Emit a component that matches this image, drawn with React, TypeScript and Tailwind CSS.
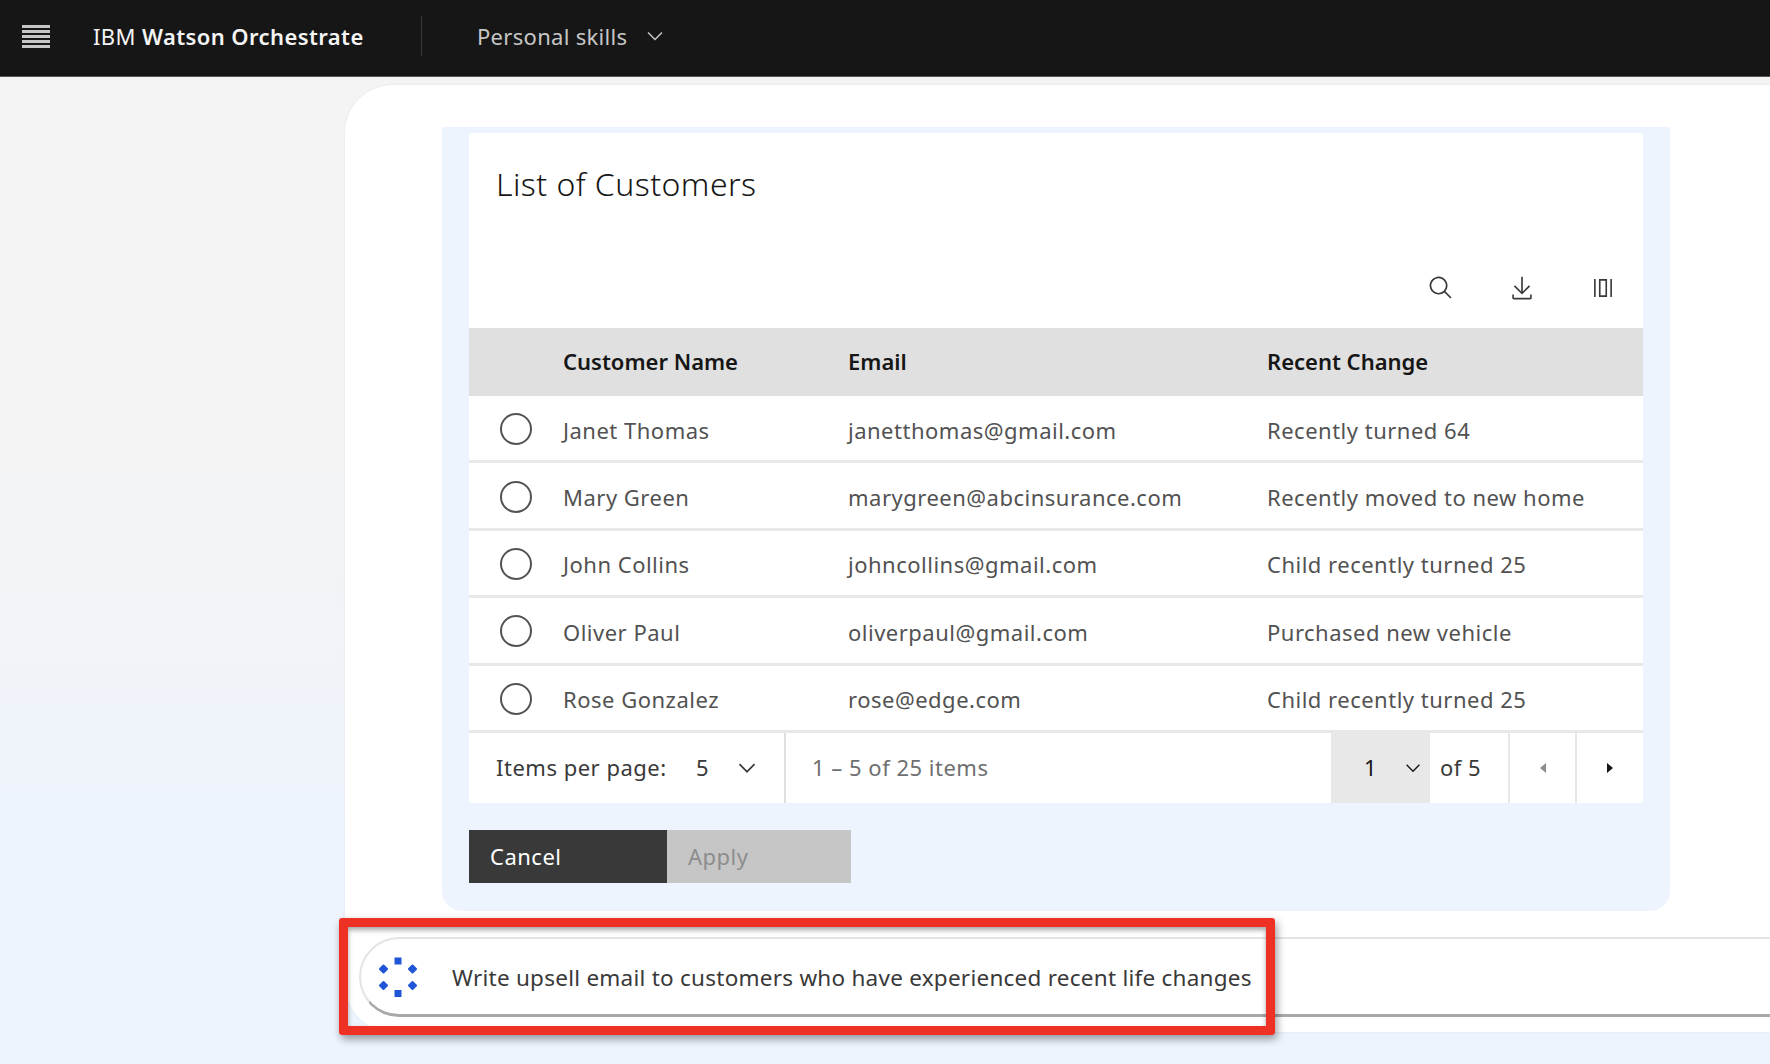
import React from "react";

const font = { fontFamily: '"Noto Sans", "Liberation Sans", sans-serif' };

function Chevron({ className }: { className: string }) {
  return (
    <svg viewBox="0 0 32 32" fill="currentColor" className={className}>
      <path d="M16 22 6 12l1.4-1.4 8.6 8.6 8.6-8.6L26 12z" />
    </svg>
  );
}

const rows = [
  ["Janet Thomas", "janetthomas@gmail.com", "Recently turned 64"],
  ["Mary Green", "marygreen@abcinsurance.com", "Recently moved to new home"],
  ["John Collins", "johncollins@gmail.com", "Child recently turned 25"],
  ["Oliver Paul", "oliverpaul@gmail.com", "Purchased new vehicle"],
  ["Rose Gonzalez", "rose@edge.com", "Child recently turned 25"],
];

function Spinner() {
  return (
    <svg viewBox="0 0 40 40" className="w-10 h-10 shrink-0" fill="#1f55d6">
      <rect x="16.5" y="0.5" width="7" height="7" />
      <rect x="16.5" y="33" width="7" height="7" />
      <rect x="2" y="8.5" width="7" height="7" rx="1" transform="rotate(45 5.5 12)" />
      <rect x="31" y="8.5" width="7" height="7" rx="1" transform="rotate(45 34.5 12)" />
      <rect x="2" y="25" width="7" height="7" rx="1" transform="rotate(45 5.5 28.5)" />
      <rect x="31" y="25" width="7" height="7" rx="1" transform="rotate(45 34.5 28.5)" />
    </svg>
  );
}

export default function App() {
  return (
    <div
      style={font}
      className="relative h-[1064px] w-full overflow-hidden flex flex-col bg-gradient-to-b from-[#f4f4f4] from-40% to-[#edf4fe] to-85%"
    >
      <header className="h-[77px] shrink-0 bg-[#161616] border-b border-[#555] flex items-center pb-[4px]">
        <div className="ml-[22px] w-7 flex flex-col gap-[2px]">
          <span className="h-[3px] bg-[#c6c6c6]" />
          <span className="h-[3px] bg-[#c6c6c6]" />
          <span className="h-[3px] bg-[#c6c6c6]" />
          <span className="h-[3px] bg-[#c6c6c6]" />
          <span className="h-[3px] bg-[#c6c6c6]" />
        </div>
        <div className="ml-[43px] w-[328px] text-[22px] text-[#f4f4f4] tracking-[0.4px] whitespace-nowrap">
          IBM <span className="font-semibold">Watson Orchestrate</span>
        </div>
        <div className="h-10 w-px bg-[#393939]" />
        <div className="ml-[55px] text-[22px] text-[#c6c6c6] tracking-[0.3px] whitespace-nowrap">Personal skills</div>
        <Chevron className="ml-[16px] w-[24px] h-[24px] text-[#c6c6c6]" />
      </header>

      <div className="flex-1 flex">
        <div className="w-[345px] shrink-0" />
        <main className="mt-2 mb-8 flex-1 bg-white rounded-l-[48px] pt-[42px] flex flex-col shadow-[0_0_3px_rgba(0,0,0,0.06)]">
          <section className="ml-[97px] w-[1228px] h-[784px] shrink-0 bg-[#edf4fe] rounded-b-[20px] pt-[6px] pl-[27px] pr-[27px]">
            <div className="bg-white">
              <div className="h-[195px] flex flex-col justify-between">
                <h1 className="pl-[27px] pt-[28px] text-[32px] leading-[46px] font-light text-[#161616] tracking-[0.45px]">
                  List of Customers
                </h1>
                <div className="flex justify-end pr-[27px] pb-[27px] gap-[55px] text-[#393939]">
                  <svg viewBox="0 0 32 32" fill="currentColor" className="w-[26px] h-[26px]">
                    <path d="M29,27.5859l-7.5521-7.5521a11.0177,11.0177,0,1,0-1.4141,1.4141L27.5859,29ZM4,13a9,9,0,1,1,9,9A9.01,9.01,0,0,1,4,13Z" />
                  </svg>
                  <svg viewBox="0 0 32 32" fill="currentColor" className="w-[26px] h-[26px]">
                    <path d="M26,24v4H6V24H4v4a2,2,0,0,0,2,2H26a2,2,0,0,0,2-2V24Z" />
                    <path d="M26 14 24.59 12.59 17 20.17 17 2 15 2 15 20.17 7.41 12.59 6 14 16 24 26 14z" />
                  </svg>
                  <svg viewBox="0 0 32 32" fill="currentColor" className="w-[26px] h-[26px]">
                    <path d="M5 5h2v22H5zM25 5h2v22h-2zM11 5h10v22H11zM13 7v18h6V7z" fillRule="evenodd" />
                  </svg>
                </div>
              </div>

              <div className="h-[68px] pb-[2px] bg-[#e0e0e0] grid grid-cols-[94px_285px_419px_1fr] items-center text-[22px] font-semibold text-[#161616]">
                <span />
                <span>Customer Name</span>
                <span>Email</span>
                <span>Recent Change</span>
              </div>

              {rows.map((r) => (
                <div
                  key={r[0]}
                  className="h-[67.4px] pt-[4px] border-b-[3px] border-[#e8e8e8] grid grid-cols-[94px_285px_419px_1fr] items-center text-[22px] text-[#525252] tracking-[0.5px]"
                >
                  <span className="ml-[31px] -mt-[2px] w-8 h-8 rounded-full border-2 border-[#525252]" />
                  <span>{r[0]}</span>
                  <span>{r[1]}</span>
                  <span>{r[2]}</span>
                </div>
              ))}

              <div className="h-[70px] flex items-stretch text-[22px] text-[#525252] tracking-[0.5px]">
                <div className="w-[317px] flex items-center border-r-2 border-[#e0e0e0] pl-[27px] text-[#393939]">
                  <span className="w-[200px] whitespace-nowrap">Items per page:</span>
                  <span>5</span>
                  <Chevron className="ml-[25px] w-[26px] h-[26px]" />
                </div>
                <div className="flex-1 flex items-center pl-[26px] text-[#6f6f6f]">1 – 5 of 25 items</div>
                <div className="w-[99px] bg-[#e8e8e8] flex items-center text-[#161616]">
                  <span className="ml-[33px] w-[38px]">1</span>
                  <Chevron className="w-[22px] h-[22px]" />
                </div>
                <div className="w-[80px] border-r-2 border-[#e8e8e8] flex items-center pl-[10px] text-[#393939] whitespace-nowrap">of 5</div>
                <div className="w-[67px] border-r-2 border-[#e8e8e8] flex items-center justify-center">
                  <svg viewBox="0 0 8 12" fill="#8d8d8d" className="w-2 h-3"><path d="M7 1v10L1 6z" /></svg>
                </div>
                <div className="w-[66px] flex items-center justify-center">
                  <svg viewBox="0 0 8 12" fill="#161616" className="w-2 h-3"><path d="M1 1v10l6-5z" /></svg>
                </div>
              </div>
            </div>

            <div className="mt-[27px] flex h-[53px] text-[22px] tracking-[0.5px]">
              <div className="w-[198px] bg-[#393939] text-white flex items-center pl-[21px]">Cancel</div>
              <div className="w-[184px] bg-[#c6c6c6] text-[#8d8d8d] flex items-center pl-[21px]">Apply</div>
            </div>
          </section>

          <div className="ml-[14px] mt-[26px] h-[80px] shrink-0 rounded-l-[40px] border-t-2 border-l-2 border-[#e4e4e4] border-b-[3px] border-b-[#a8a8a8] flex items-center pl-[17px]">
            <Spinner />
            <span className="ml-[34px] pt-[2px] text-[22.5px] text-[#393939] tracking-[0.25px] whitespace-nowrap">
              Write upsell email to customers who have experienced recent life changes
            </span>
          </div>
        </main>
      </div>

      <div className="absolute left-[339px] top-[918px] w-[936px] h-[117px] border-[9px] border-[#ee3124] rounded-[3px] shadow-[2px_4px_8px_rgba(0,0,0,0.4),inset_0_3px_5px_rgba(0,0,0,0.35)]" />
    </div>
  );
}
